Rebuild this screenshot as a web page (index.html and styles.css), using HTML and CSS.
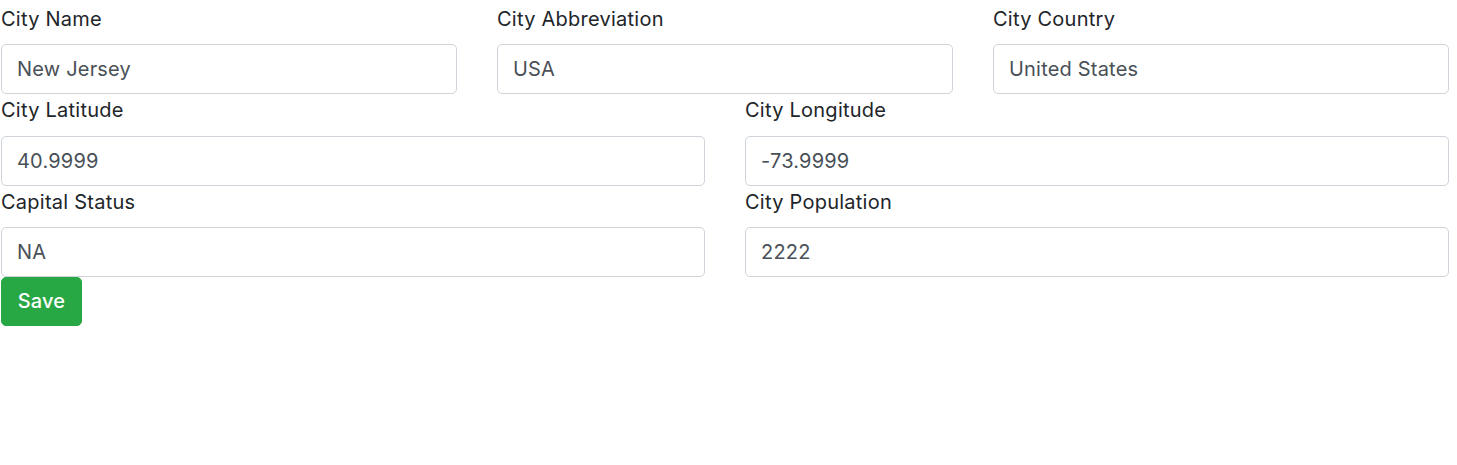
FILE: index.html
```html
<!DOCTYPE html>
<html lang="en">
<head>
<meta charset="utf-8">
<title>City Form</title>
<link rel="stylesheet" href="styles.css">
</head>
<body>
<form class="city-form">
  <div class="row row-3">
    <div class="field">
      <label class="label">City Name</label>
      <input class="input" type="text" value="New Jersey">
    </div>
    <div class="field">
      <label class="label">City Abbreviation</label>
      <input class="input" type="text" value="USA">
    </div>
    <div class="field">
      <label class="label">City Country</label>
      <input class="input" type="text" value="United States">
    </div>
  </div>
  <div class="row row-2">
    <div class="field">
      <label class="label">City Latitude</label>
      <input class="input" type="text" value="40.9999">
    </div>
    <div class="field">
      <label class="label">City Longitude</label>
      <input class="input" type="text" value="-73.9999">
    </div>
  </div>
  <div class="row row-2">
    <div class="field">
      <label class="label">Capital Status</label>
      <input class="input" type="text" value="NA">
    </div>
    <div class="field">
      <label class="label">City Population</label>
      <input class="input" type="text" value="2222">
    </div>
  </div>
  <button class="btn-save" type="button">Save</button>
</form>
</body>
</html>
```
FILE: styles.css
```css
html, body {
  margin: 0;
  padding: 0;
  background: #ffffff;
}

body {
  font-family: Inter, "Liberation Sans", sans-serif;
  font-size: 20px;
  letter-spacing: 0.2px;
  color: #212529;
}

.city-form {
  width: 1448px;
  padding: 2.5px 0 0 1px;
}

.row {
  display: grid;
  column-gap: 40px;
}

.row-3 {
  grid-template-columns: repeat(3, 1fr);
}

.row-2 {
  grid-template-columns: repeat(2, 1fr);
}

.field {
  display: flex;
  flex-direction: column;
}

.label {
  display: block;
  line-height: 32px;
  margin-bottom: 9.5px;
  letter-spacing: 0.25px;
}

.input {
  box-sizing: border-box;
  height: 50px;
  width: 100%;
  margin: 0;
  padding: 0 15px;
  font-family: inherit;
  font-size: 20px;
  letter-spacing: 0.2px;
  color: #495057;
  background: #ffffff;
  border: 1px solid #ced4da;
  border-radius: 5px;
  outline: none;
}

.btn-save {
  display: block;
  box-sizing: border-box;
  height: 49px;
  width: 81px;
  margin: -0.5px 0 0 0;
  padding: 0;
  font-family: inherit;
  font-size: 20px;
  font-weight: 500;
  letter-spacing: 0.2px;
  color: #ffffff;
  background: #28a745;
  border: 1px solid #28a745;
  border-radius: 5px;
  cursor: pointer;
}
```
